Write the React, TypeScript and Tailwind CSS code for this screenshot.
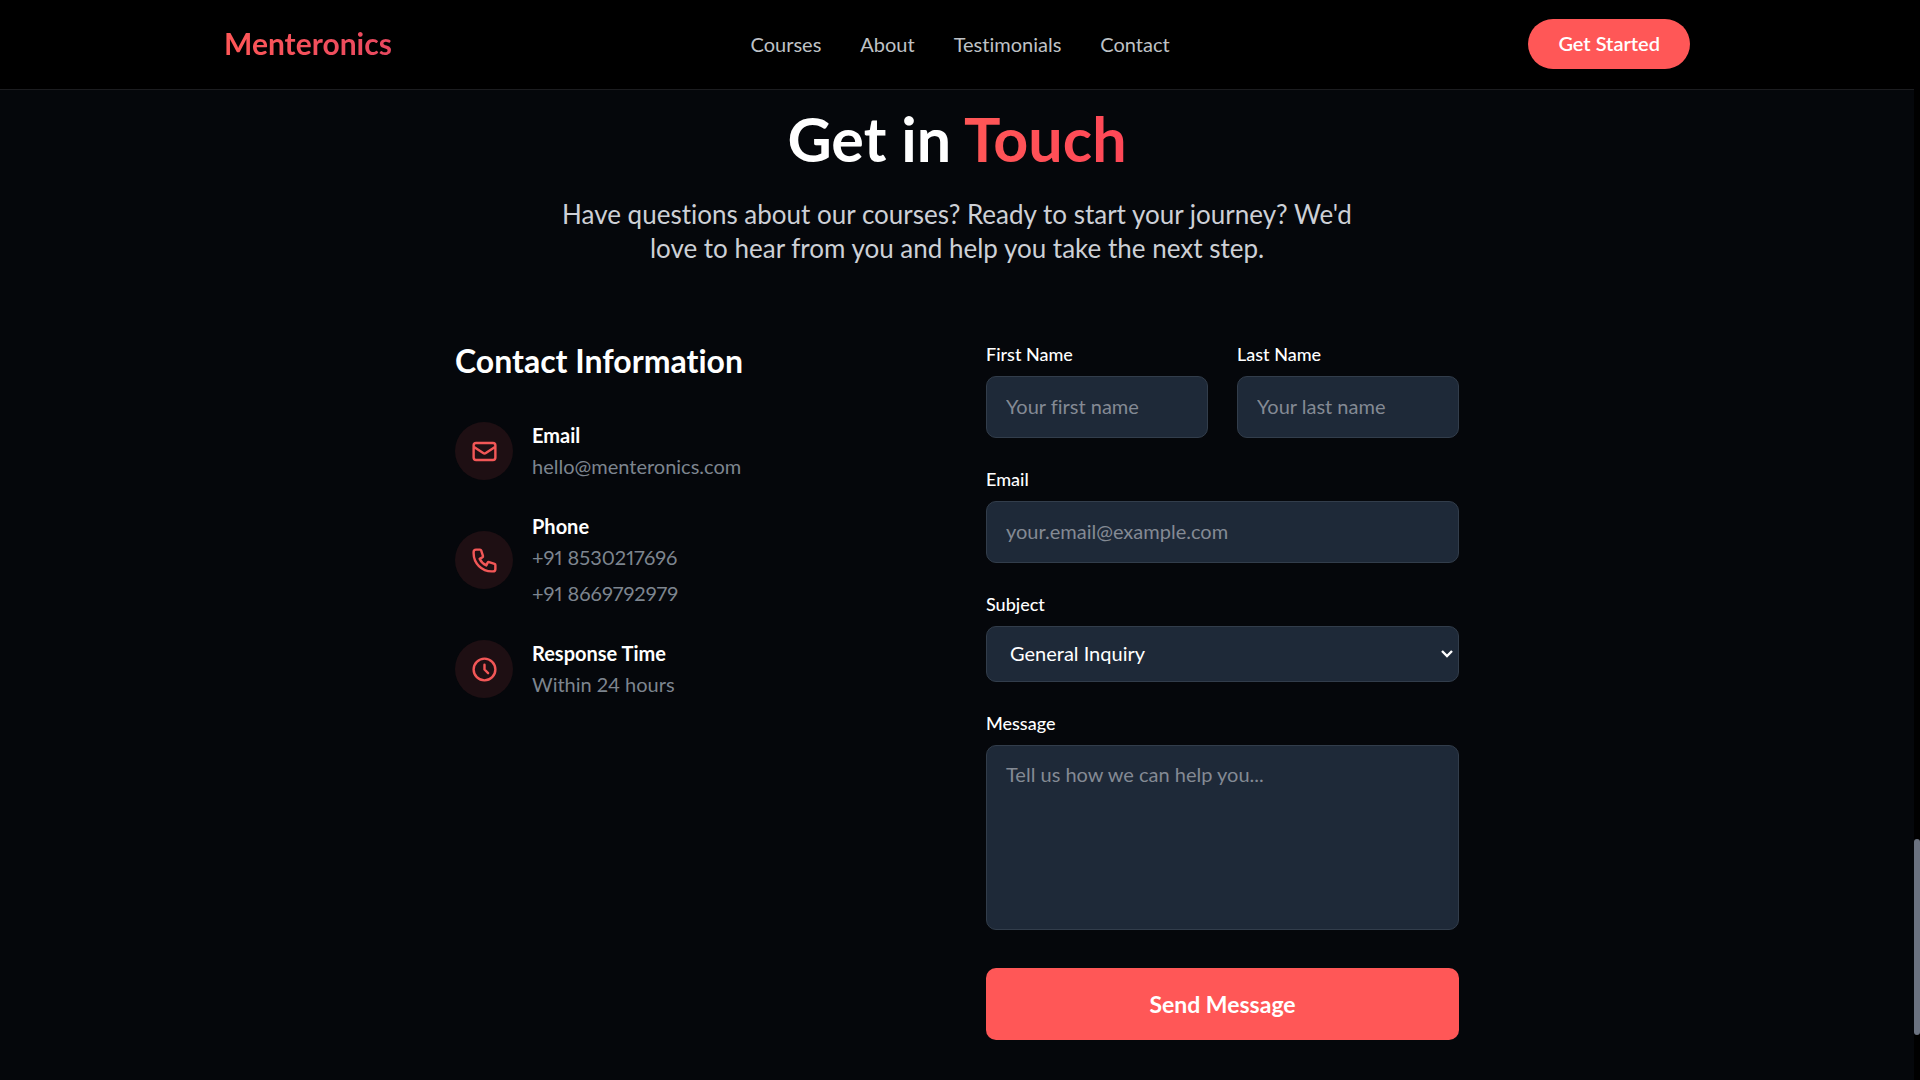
import React from "react";

const navLinks = ["Courses", "About", "Testimonials", "Contact"];

const contactItems = [
  {
    title: "Email",
    lines: ["hello@menteronics.com"],
    path: "M3 8l7.89 5.26a2 2 0 002.22 0L21 8M5 19h14a2 2 0 002-2V7a2 2 0 00-2-2H5a2 2 0 00-2 2v10a2 2 0 002 2z",
  },
  {
    title: "Phone",
    lines: ["+91 8530217696", "+91 8669792979"],
    path: "M3 5a2 2 0 012-2h3.28a1 1 0 01.948.684l1.498 4.493a1 1 0 01-.502 1.21l-2.257 1.13a11.042 11.042 0 005.516 5.516l1.13-2.257a1 1 0 011.21-.502l4.493 1.498a1 1 0 01.684.949V19a2 2 0 01-2 2h-1C9.716 21 3 14.284 3 6V5z",
  },
  {
    title: "Response Time",
    lines: ["Within 24 hours"],
    path: "M12 8v4l3 3m6-3a9 9 0 11-18 0 9 9 0 0118 0z",
  },
];

const fieldClass =
  "block w-full rounded-[10px] border border-[#323d4b] bg-[#1e2938] px-[19px] text-[20px] text-white placeholder:text-[#848a94] outline-none focus:border-[#ff5757]";

function Field({ id, label, children }: { id: string; label: string; children: React.ReactNode }) {
  return (
    <div>
      <label htmlFor={id} className="mb-[10px] block text-[18px] leading-6 font-medium text-white">
        {label}
      </label>
      {children}
    </div>
  );
}

function Header() {
  return (
    <header className="border-b border-[#1c1d20] bg-black">
      <div className="mx-auto flex h-[89px] max-w-[1466px] items-center justify-between pb-0.5">
        <a
          href="#home"
          className="bg-linear-to-r from-[#ff5757] to-[#e8485f] bg-clip-text text-[30px] font-bold text-transparent"
        >
          Menteronics
        </a>
        <nav className="flex gap-[39px]">
          {navLinks.map((name) => (
            <a key={name} href={"#" + name.toLowerCase()} className="text-[20px] text-[#bfc2c6]">
              {name}
            </a>
          ))}
        </nav>
        <button
          type="button"
          className="h-[50px] rounded-full bg-[#ff5757] px-[30px] pb-0.5 text-[20px] font-semibold text-white"
        >
          Get Started
        </button>
      </div>
    </header>
  );
}

function ContactInfo() {
  return (
    <div>
      <h2 className="text-[32px] leading-[38px] font-bold text-white">Contact Information</h2>
      <div className="mt-10 flex flex-col gap-[29px]">
        {contactItems.map((item) => (
          <div key={item.title} className="flex items-center gap-[19px]">
            <div className="flex size-[58px] shrink-0 items-center justify-center rounded-full bg-[#1e0f13]">
              <svg
                viewBox="0 0 24 24"
                fill="none"
                stroke="#f25757"
                strokeWidth="2"
                strokeLinecap="round"
                strokeLinejoin="round"
                className="size-[29px]"
                aria-hidden="true"
              >
                <path d={item.path} />
              </svg>
            </div>
            <div>
              <h3 className="text-[20px] leading-[31px] font-bold text-white">{item.title}</h3>
              <div className="flex flex-col gap-[5px]">
                {item.lines.map((line) => (
                  <p key={line} className="text-[20px] leading-[31px] text-[#7d858f] proportional-nums">
                    {line}
                  </p>
                ))}
              </div>
            </div>
          </div>
        ))}
      </div>
    </div>
  );
}

function ContactForm() {
  return (
    <form className="flex flex-col gap-[29px]" onSubmit={(e) => e.preventDefault()}>
      <div className="grid grid-cols-2 gap-[29px]">
        <Field id="first" label="First Name">
          <input id="first" type="text" placeholder="Your first name" className={fieldClass + " h-[62px] pb-0.5"} />
        </Field>
        <Field id="last" label="Last Name">
          <input id="last" type="text" placeholder="Your last name" className={fieldClass + " h-[62px] pb-0.5"} />
        </Field>
      </div>
      <Field id="email" label="Email">
        <input
          id="email"
          type="email"
          placeholder="your.email@example.com"
          className={fieldClass + " h-[62px] pb-0.5"}
        />
      </Field>
      <Field id="subject" label="Subject">
        <div className="relative">
          <select id="subject" className={fieldClass + " h-14 appearance-none pb-0.5 pl-[23px]"}>
            <option>General Inquiry</option>
            <option>Course Information</option>
            <option>Technical Support</option>
          </select>
          <svg
            viewBox="0 0 12 8"
            fill="none"
            stroke="white"
            strokeWidth="2.4"
            className="pointer-events-none absolute top-6 right-[6px] h-2 w-3"
            aria-hidden="true"
          >
            <path d="M1 1l5 5 5-5" />
          </svg>
        </div>
      </Field>
      <Field id="message" label="Message">
        <textarea
          id="message"
          placeholder="Tell us how we can help you..."
          className={fieldClass + " h-[185px] resize-none py-[13px] leading-[31px]"}
        />
      </Field>
      <button
        type="submit"
        className="mt-[9px] h-[72px] w-full rounded-[10px] bg-[#ff5757] text-[23px] font-bold text-white"
      >
        Send Message
      </button>
    </form>
  );
}

export default function App() {
  return (
    <div className="min-h-screen bg-[#05070b] pr-1.5 font-['Lato',sans-serif] [font-variant-ligatures:none]">
      <Header />
      <main className="px-6 pt-5 pb-10">
        <div className="text-center">
          <h1 className="text-[61px] leading-[58px] font-bold text-white">
            Get in{" "}
            <span className="bg-linear-to-r from-[#ff5757] to-[#ff4757] bg-clip-text text-transparent">Touch</span>
          </h1>
          <p className="mx-auto mt-[29px] max-w-[806px] text-[26px] leading-[34px] text-[#cdd0d6]">
            Have questions about our courses? Ready to start your journey? We'd love to hear from you and help you take
            the next step.
          </p>
        </div>
        <div className="mx-auto mt-[77px] grid max-w-[1004px] grid-cols-2 gap-[58px]">
          <ContactInfo />
          <ContactForm />
        </div>
      </main>
      <div className="fixed inset-y-0 right-0 flex w-1.5 flex-col bg-black" aria-hidden="true">
        <div className="flex-[839]" />
        <div className="flex-[196] rounded-full bg-[#6b7280]" />
        <div className="flex-[45]" />
      </div>
    </div>
  );
}
